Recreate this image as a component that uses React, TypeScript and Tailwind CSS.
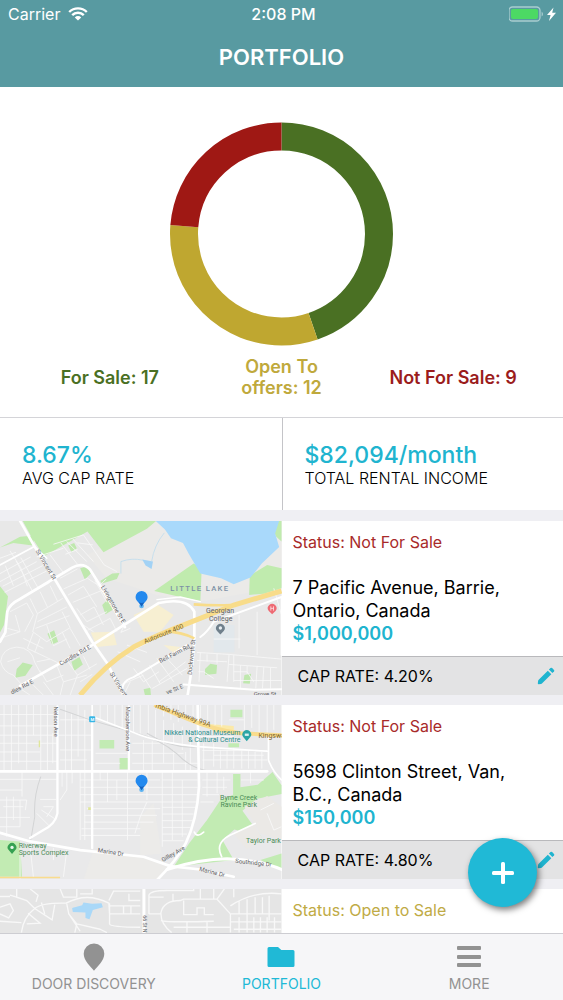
import React from 'react';

type StatusKind = 'notForSale' | 'openToSale';

interface Property {
  id: number;
  status: StatusKind;
  address: string;
  price: string;
  capRate: string;
  map: React.ReactNode;
}

interface Slice {
  label: string;
  value: number;
  color: string;
  textClass: string;
}

const SLICES: Slice[] = [
  { label: 'For Sale: 17', value: 17, color: '#4a7023', textClass: 'text-[#4a7023]' },
  { label: 'Open To\noffers: 12', value: 12, color: '#bfa730', textClass: 'text-[#bfa93c]' },
  { label: 'Not For Sale: 9', value: 9, color: '#9f1814', textClass: 'text-[#9b1c1c]' },
];

const STATUS: Record<StatusKind, { label: string; className: string }> = {
  notForSale: { label: 'Status: Not For Sale', className: 'text-[#a82a2a]' },
  openToSale: { label: 'Status: Open to Sale', className: 'text-[#bfab45]' },
};

const MAP_FONT = 'Roboto, sans-serif';

/** Donut with one arc per slice, clockwise from 12 o'clock. */
const DonutChart: React.FC<{ slices: Slice[] }> = ({ slices }) => {
  const total = slices.reduce((sum, s) => sum + s.value, 0);
  let start = 0;
  return (
    <svg viewBox="0 0 224 224" className="h-56 w-56" role="img" aria-label="Portfolio by status">
      <g transform="rotate(-90 112 112)" fill="none" strokeWidth="28">
        {slices.map((s) => {
          const length = (s.value / total) * 100;
          const offset = -start;
          start += length;
          return (
            <circle
              key={s.label}
              cx="112"
              cy="111.5"
              r="97.5"
              stroke={s.color}
              pathLength={100}
              strokeDasharray={`${length} ${100 - length}`}
              strokeDashoffset={offset}
            />
          );
        })}
      </g>
    </svg>
  );
};

const Marker = ({ x, y }: { x: number; y: number }) => (
  <g transform={`translate(${x} ${y})`}>
    <circle cx="0" cy="44" r="7" fill="#5fb4f2" />
    <path d="M0 46 C-3 36 -18 30 -18 17 A18 18 0 0 1 18 17 C18 30 3 36 0 46Z" fill="#2389ee" />
    <path d="M-8 33 Q0 37 8 33 L0 46Z" fill="#1561bd" />
  </g>
);

const BarrieMap = () => (
  <svg viewBox="0 18 843 522" preserveAspectRatio="xMidYMid slice" className="h-full w-full" aria-hidden>
    <rect width="843" height="560" fill="#e8e8e8" />
    <path d="M465 18 L260 120 L320 190 L470 240 L600 260 L843 215 V18Z" fill="#ebeae8" />
    <path d="M68 18 H468 L440 42 L310 112 L262 50 L132 124 L92 62Z" fill="#c0ebae" />
    <path d="M0 98 L60 66 L104 62 L98 92 L40 84Z M0 214 L24 244 L12 330 L0 352Z" fill="#c0ebae" />
    <path d="M462 228 L580 146 L604 160 L600 258 L540 246Z" fill="#c0ebae" />
    <path d="M748 182 L800 150 L843 160 V220 L790 236 L746 240Z M808 18 H843 V80 L826 64Z" fill="#c0ebae" />
    <path
      d="M204 92 L222 84 L230 100 L214 112Z M240 160 L262 154 L272 176 L254 194Z M300 198 L336 176 L358 174 L350 192 L306 206Z M306 270 L324 252 L338 284 L316 298Z M142 356 L162 346 L174 380 L156 388Z M50 462 L68 442 L98 450 L76 482 L46 488Z M214 440 L238 426 L248 448 L222 468Z M614 462 L630 446 L650 450 L648 476 L614 480Z M732 480 L752 476 L748 506 L728 504Z M430 522 L450 518 L452 540 H434Z"
      fill="#bfe8ae"
    />
    <path
      d="M466 18 H836 L824 56 L836 96 L784 146 L750 188 L700 208 L662 190 L600 176 L566 118 L548 84 L512 70 L494 44Z"
      fill="#a9d9fb"
    />
    <path d="M426 134 L458 140 L454 162 L436 152Z" fill="#a2d2f5" />
    <path d="M362 176 V140 Q396 128 428 136 M454 140 Q462 90 492 54" fill="none" stroke="#b5d9ee" strokeWidth="2" />
    <path d="M400 300 L470 268 L520 300 L480 350 L430 350Z M272 352 L340 350 L350 390 L290 396Z M490 390 L540 396 L520 414Z" fill="#f7efd2" />
    <path d="M640 330 H702 V412 H640Z" fill="#e2e8ec" />
    <path
      d="M110 126 L190 100 M150 120 L192 176 M160 88 L250 60 L312 150 L350 170 M182 84 L232 148 M200 80 L260 140 M218 72 L280 140 M196 118 L232 104 M232 84 L278 90 M0 176 L92 126 M0 200 L110 140 M8 214 L128 152 M14 232 L140 168 M30 108 L62 158 L82 214 M0 130 L48 112 M48 138 L98 230 M62 128 L116 222 M16 152 L40 212"
      fill="none"
      stroke="#f8f8f8"
      strokeWidth="2.5"
    />
    <path
      d="M180 190 L232 162 M190 222 L262 190 L302 216 M204 240 L250 214 L290 276 M218 262 L306 226 M230 280 L260 320 L320 290 M240 300 L282 276 L310 330 M250 330 L280 350 M262 346 L330 310 L350 350 M284 196 L320 262 M318 192 L300 210 M40 262 L148 204 M30 290 L80 264 L100 300 L74 350 M90 250 L112 296 L188 250 M120 230 L142 276 M150 212 L172 258 M46 300 L60 350 L22 340 M112 296 L98 350 L140 380 M112 320 L200 276 M106 340 L208 302 M140 380 L210 338 L186 290 M140 330 L160 392 M100 352 L82 400 L180 446 M70 370 L130 400 M120 370 L104 412 M210 340 L240 392 M186 350 L210 400 M160 392 L200 372 M0 370 L60 350"
      fill="none"
      stroke="#f7f7f7"
      strokeWidth="2.5"
    />
    <path
      d="M2 440 Q6 400 50 396 Q96 398 104 442 L126 482 M2 440 Q10 472 40 480 L66 510 M22 440 L60 428 M110 440 L150 432 M120 466 L140 500 L190 480 M170 450 L190 500 L180 540 M130 500 L160 540 M204 440 L232 480 L210 540 M232 480 L290 446 M240 500 L276 478 M250 424 L270 464 M190 500 L260 480 M100 510 L130 540 M60 520 L90 540"
      fill="none"
      stroke="#f7f7f7"
      strokeWidth="2.5"
    />
    <path
      d="M372 332 L362 352 L390 340 M352 410 L420 440 M380 390 L440 412 M346 430 L470 370 M400 460 L430 500 L476 470 M420 470 L452 520 M448 450 L480 506 M470 430 L520 500 M500 430 L546 480 M476 500 L556 440 M456 520 L560 460 M360 510 L430 480 M370 540 L390 500 M590 412 L686 418 L680 500 M590 436 L680 440 M594 470 H610 L640 490 M600 412 L596 500 M620 418 V440 M650 416 V446 M686 448 L830 458 M700 420 L700 500 M720 450 V520 M740 452 V476 M770 452 L766 520 M790 456 L786 520 M810 458 V520 M700 470 H740 L760 500 M700 496 H843 M686 418 L843 432 M716 300 V400 M770 290 V420 M640 372 H720 M820 220 L843 300"
      fill="none"
      stroke="#f8f8f8"
      strokeWidth="2.5"
    />
    <g fill="none" stroke="#fff" strokeLinecap="round" strokeLinejoin="round">
      <path d="M60 18 L104 96 L166 196 L276 380 L322 446 L370 540" strokeWidth="8" />
      <path d="M0 150 L100 96 M100 92 L140 130" strokeWidth="5" />
      <path d="M0 380 L16 352 L22 290 Q28 268 60 252 L216 158 Q248 140 270 164 L306 222 L374 336" strokeWidth="8" />
      <path d="M60 512 L276 390 L476 264 Q560 246 582 290 V372 Q580 430 562 540" strokeWidth="8" />
      <path d="M370 540 Q356 500 400 486 L560 390 M600 366 Q622 350 640 320 L843 246 M550 508 L760 524 L843 522" strokeWidth="6" />
      <path d="M470 254 L540 246 L600 260" strokeWidth="4" />
      <path d="M843 246 V420" strokeWidth="5" />
    </g>
    <g fill="none" stroke="#f8dc8a">
      <path d="M500 350 Q540 350 582 370 M580 268 Q640 272 690 270" strokeWidth="8" />
      <path d="M240 540 Q312 450 400 396 Q470 360 560 326 L700 270 L843 228" strokeWidth="15" />
    </g>
    <g fill="#5d6063" fontFamily={MAP_FONT} fontSize="18">
      <text transform="translate(106 108) rotate(59)">St Vincent St</text>
      <text transform="translate(302 216) rotate(60)">Livingstone St E</text>
      <text transform="translate(182 452) rotate(-30)">Cundles Rd E</text>
      <text transform="translate(36 538) rotate(-28)">dles Rd E</text>
      <text transform="translate(328 476) rotate(58)">St Vincent</text>
      <text transform="translate(480 444) rotate(-27)">Bell Farm Rd</text>
      <text transform="translate(574 480) rotate(-84)">Duckworth St</text>
      <text transform="translate(500 538) rotate(-22)">ve St E</text>
      <text x="760" y="542">Grove St</text>
      <text transform="translate(434 386) rotate(-22)" fill="#7b6328" fontSize="20">Autoroute 400</text>
      <text x="617" y="294" fontSize="21">Georgian</text>
      <text x="626" y="317" fontSize="21">College</text>
      <text x="510" y="227" fill="#7d92a6" fontSize="23" className="font-medium tracking-[4px]">LITTLE LAKE</text>
    </g>
    <path d="M660 358 L650 348 A13 13 0 1 1 670 348Z" fill="#70808c" />
    <circle cx="660" cy="339" r="5" fill="#e8eef2" />
    <path d="M815 298 L805 288 A13 13 0 1 1 825 288Z" fill="#ee6a73" />
    <path d="M811 274 V287 M819 274 V287 M811 280 H819" stroke="#fff" strokeWidth="2" />
    <Marker x={424} y={229} />
  </svg>
);

const BurnabyMap = () => (
  <svg viewBox="0 15 843 522" preserveAspectRatio="xMidYMid slice" className="h-full w-full" aria-hidden>
    <rect width="843" height="560" fill="#e9e9ea" />
    <path d="M250 540 L280 450 L420 468 L500 500 L470 540Z M420 350 L460 310 L484 460 L420 466Z" fill="#ecebe9" />
    <path
      d="M0 420 L60 424 L66 530 H0Z M698 222 H720 V262 L772 254 L816 216 L843 256 V282 L770 296 L726 332 L784 412 L702 388 L666 420 L700 480 L520 500 L566 430 L620 360 L660 300 L698 284Z"
      fill="#c2ebb3"
    />
    <path d="M732 320 L800 288 L843 320 V420 L780 400Z M700 400 L760 372 L784 412 L740 448Z" fill="#ebe9e6" />
    <path d="M298 120 H342 V146 H298Z M358 174 H384 V208 H358Z M690 30 H726 V52 H690Z M684 130 H716 V142 H684Z M780 480 L843 460 V510Z" fill="#c2ebb3" />
    <path d="M624 72 L700 78 L700 100 L640 96Z" fill="#fbe9a8" />
    <g fill="none" stroke="#f9f9f9" strokeWidth="2.5">
      <path d="M0 44 H170 M0 78 H168 M0 106 H276 M0 130 H170 M0 156 H120 M0 184 H170 M12 15 V210 M34 15 V210 M56 15 V190 M80 15 V210 M100 15 V106 M122 15 V210 M142 15 V210 M158 100 V190 M196 15 V210 M214 40 V210 M234 15 V170 M254 30 V212 M180 60 H276 M180 150 H276 M180 180 H260" />
      <path d="M300 15 V60 M322 15 V70 M344 15 V80 M366 15 V86 M400 15 V96 M420 15 V100 M444 15 V110 M466 30 V120 M490 60 V190 M520 70 V130 M546 80 V150 M570 90 V212 M286 160 H380 M286 190 H360 M396 130 H480 M396 160 H550 M396 190 H592 M430 120 V210 M456 124 V210 M520 150 V212 M556 156 V212" />
      <path d="M490 15 V50 M512 15 V60 M534 15 V66 M556 15 V60 M578 15 V70 M600 15 V80 M622 15 V60 M644 15 V76 M664 15 V80 M686 60 H730 M732 15 V90 M754 15 V84 M776 15 V100 M800 15 V110 M820 15 V90 M600 110 H700 M610 130 V210 M640 130 V200 M660 150 V206 M680 150 V206 M700 144 V206 M724 150 V206 M744 150 V206 M764 156 V206 M784 156 V206 M606 180 H800 M640 166 H790 M606 152 H800" />
      <path d="M0 238 H170 M0 270 H66 M0 300 H80 L76 330 M0 352 H90 M20 290 V410 M40 290 V360 M66 215 V290 M60 300 V380 M10 320 H70 M0 380 H60 M200 215 V270 L180 300 M186 215 V260 M216 215 V250 M120 298 H168 M130 320 H160 L140 350 M110 340 L150 380 M124 330 L164 356" />
      <path d="M240 215 V420 M254 215 V420 M240 240 H480 M240 262 H592 M240 284 H592 M240 306 H590 M260 326 H480 M252 346 H470 M252 366 H460 M244 386 H420 M244 406 H420 M300 215 V240 M322 215 V306 M350 240 V300 M382 215 V420 M440 215 V300 M486 215 V440 M516 215 V420 M546 240 V410 M486 240 H592 M486 322 H586 M486 342 H580 M486 362 H576 M486 382 H570 M486 402 H560 M486 422 H550 M440 306 L420 350 L404 400" />
      <path d="M606 240 H690 M606 262 H680 M620 215 V290 M650 215 V280 M670 230 V270 M606 284 H656 M600 306 H640 M722 240 H790 M750 215 V250 M90 440 L100 530 M60 430 V540 M160 444 V480 M200 450 L190 530 M800 340 L820 390 L843 380 M780 330 L820 310" />
    </g>
    <g fill="none" stroke="#d3d4d5" strokeWidth="3">
      <path d="M180 28 L270 60 L400 98 Q480 118 530 162 Q570 204 620 212 L790 212 M440 100 Q520 150 600 140 M122 230 Q100 290 104 350 L92 420" />
    </g>
    <g fill="none" stroke="#fff" strokeLinecap="round" strokeLinejoin="round">
      <path d="M0 214 H800" strokeWidth="8" />
      <path d="M172 20 V340 Q166 372 130 390 L90 414 M276 60 V444 M386 20 V210" strokeWidth="7" />
      <path d="M592 15 L596 260 Q590 360 556 430 Q530 480 470 540" strokeWidth="8" />
      <path d="M0 398 L90 424 L240 450 L430 470 L510 498 L600 508 L700 530" strokeWidth="8" />
      <path d="M500 508 Q600 476 680 476 Q780 480 843 508" strokeWidth="9" />
      <path d="M804 110 V180 Q816 214 843 240 M610 396 Q590 414 582 396 M664 470 Q640 424 700 400 L764 370 M276 15 V50 L400 98 Q470 128 592 140 L800 154" strokeWidth="5" />
    </g>
    <path d="M462 15 L560 56 Q640 90 720 100 L843 106" fill="none" stroke="#f9dc8d" strokeWidth="12" />
    <path d="M0 532 H180" stroke="#f9dc8d" strokeWidth="5" />
    <path d="M264 322 h8 v8 h-8Z M116 122 h4 v20 h-4Z" fill="#dfe69a" />
    <rect x="267" y="49" width="18" height="18" rx="3" fill="#35b5e5" />
    <text x="271" y="63" fill="#fff" fontFamily={MAP_FONT} fontSize="13" className="font-bold">M</text>
    <g fill="#5d6063" fontFamily={MAP_FONT} fontSize="18">
      <text transform="translate(162 20) rotate(90)">Nelson Ave</text>
      <text transform="translate(376 20) rotate(90)">Macpherson Ave</text>
      <text transform="translate(292 456) rotate(9)">Marine Dr</text>
      <text transform="translate(488 486) rotate(-30)">Gilley Ave</text>
      <text transform="translate(596 512) rotate(14)">Marine Dr</text>
      <text transform="translate(704 488) rotate(6)">Southridge Dr</text>
      <text transform="translate(464 22) rotate(20)" fill="#7b6328" fontSize="21">mbia Highway 99A</text>
      <text x="774" y="114" fill="#7b6328" fontSize="21">Kingsway</text>
    </g>
    <g fill="#2c8e8e" fontFamily={MAP_FONT} fontSize="21" textAnchor="end">
      <text x="720" y="106">Nikkei National Museum</text>
      <text x="720" y="127">&amp; Cultural Centre</text>
    </g>
    <g fill="#4a8b57" fontFamily={MAP_FONT} fontSize="21">
      <text x="659" y="300">Byrne Creek</text>
      <text x="660" y="321">Ravine Park</text>
      <text x="56" y="444">Riverway</text>
      <text x="56" y="465">Sports Complex</text>
      <text x="737" y="429">Taylor Park</text>
    </g>
    <path d="M739 124 L729 112 A13 13 0 1 1 749 112Z" fill="#2aa5a5" />
    <path d="M733 108 V101 H745 V108Z" fill="#d9f1f1" />
    <path d="M36 462 L26 450 A13 13 0 1 1 46 450Z" fill="#36a052" />
    <circle cx="36" cy="442" r="5" fill="#e9f6ec" />
    <Marker x={424} y={225} />
  </svg>
);

const EdmontonMap = () => (
  <svg viewBox="0 25 843 522" preserveAspectRatio="xMidYMid slice" className="h-full w-full" aria-hidden>
    <rect width="843" height="560" fill="#e5e5e5" />
    <path d="M216 82 L246 74 L250 66 L276 70 L304 68 L308 80 L278 88 L268 116 L256 112 L256 96 L218 94Z" fill="#a9d8f8" />
    <g fill="none" stroke="#f8f8f8" strokeWidth="4">
      <path d="M0 80 L30 70 L40 90 L26 112 L0 100 M50 25 V50 L80 60 L104 84 M50 50 L30 44 M64 156 Q70 110 104 84 Q124 66 200 68 M90 25 L114 44 L108 64 M104 84 L156 118 L164 72 M84 98 L120 128 L80 130 M124 66 L134 100 M0 122 L64 126 M180 25 L190 50 H230 V25 M0 48 H30" />
      <path d="M198 68 Q260 34 326 68 L328 100 H420 M200 70 L206 100 L230 130 L224 156 M230 130 L300 146 M206 100 L240 152 M328 68 V130 Q330 140 420 140 M328 76 H420 M326 60 L340 32 H420 M370 76 V100 M386 40 V60 H420 M392 76 V100 M240 40 H276 V25 M300 146 L320 156" />
      <path d="M446 100 V44 Q450 30 500 30 H580 V25 M446 50 H490 M446 100 H480 M514 156 Q480 130 482 96 Q490 60 540 60 L550 56 H650 L690 100 V156 M550 60 V102 H590 V82 H612 V102 H640 M482 120 Q500 126 640 122 M640 25 V56 M600 25 V56 M650 56 L672 25 M518 40 V60 M520 140 H690 M560 122 V156 M620 122 V156 M690 76 Q760 30 843 40 M692 100 H843 M692 124 H843 M716 60 V100 M740 56 V156 M764 50 V100 M786 50 V100 M806 46 V120 M716 110 V156 M760 110 V156 M780 110 V156 M800 110 V156 M822 110 V156 M700 146 H843 M700 25 V50" />
    </g>
    <path d="M431 25 V540" stroke="#fff" strokeWidth="9" />
    <text transform="translate(427 104) rotate(90)" fill="#5d6063" fontFamily={MAP_FONT} fontSize="16">66 St NW</text>
  </svg>
);

const PROPERTIES: Property[] = [
  {
    id: 1,
    status: 'notForSale',
    address: '7 Pacific Avenue, Barrie, Ontario, Canada',
    price: '$1,000,000',
    capRate: '4.20%',
    map: <BarrieMap />,
  },
  {
    id: 2,
    status: 'notForSale',
    address: '5698 Clinton Street, Van, B.C., Canada',
    price: '$150,000',
    capRate: '4.80%',
    map: <BurnabyMap />,
  },
  {
    id: 3,
    status: 'openToSale',
    address: '66 Street NW, Edmonton, Alberta, Canada',
    price: '$320,000',
    capRate: '5.10%',
    map: <EdmontonMap />,
  },
];

const WifiIcon = () => (
  <svg viewBox="0 0 20 14" className="h-3.5 w-5" aria-hidden>
    <g fill="none" stroke="#fff" strokeWidth="2.4">
      <path d="M1.2 5 A12.6 12.6 0 0 1 18.8 5" />
      <path d="M4.2 8.2 A8.2 8.2 0 0 1 15.8 8.2" />
    </g>
    <path d="M6.8 10.4 A4.6 4.6 0 0 1 13.2 10.4 L10 13.6Z" fill="#fff" />
  </svg>
);

const BatteryIcon = () => (
  <svg viewBox="0 0 50 18" className="h-[18px] w-[50px]" aria-hidden>
    <rect x="0" y="2" width="31" height="14" rx="3.5" fill="none" stroke="#a9cdd0" strokeWidth="1.3" />
    <rect x="2" y="4" width="27" height="10" rx="2" fill="#4cd964" />
    <path d="M32.6 6.5 Q34 7.5 34 9 Q34 10.5 32.6 11.5Z" fill="#a9cdd0" />
    <path d="M44.5 2.5 L38 10 H41.6 L40 16 L47 7.8 H43.2Z" fill="#fff" />
  </svg>
);

const PencilIcon = () => (
  <svg viewBox="0 0 18 18" className="h-[18px] w-[18px]" fill="currentColor" aria-hidden>
    <path d="M10.8 3.7 L14.3 7.2 L5.2 16.3 Q4.7 16.8 4 16.9 L1.6 17.2 Q.8 17.2 .8 16.4 L1.1 14 Q1.2 13.3 1.7 12.8Z" />
    <path d="M11.9 2.6 L13.5 1 Q14.3 .3 15.1 1 L17 2.9 Q17.7 3.7 17 4.5 L15.4 6.1Z" />
  </svg>
);

const PinIcon = () => (
  <svg viewBox="0 0 22 28" className="h-7 w-[22px]" fill="currentColor" aria-hidden>
    <path d="M11 .5 A10.3 10.3 0 0 1 21.3 10.8 C21.3 17.5 14.5 23.5 11 27.8 C7.5 23.5 .7 17.5 .7 10.8 A10.3 10.3 0 0 1 11 .5Z" />
  </svg>
);

const FolderIcon = () => (
  <svg viewBox="0 0 28 28" className="h-7 w-7" fill="currentColor" aria-hidden>
    <path d="M2 4 H11 L14.3 7 H26 Q27.5 7 27.5 8.5 V22.5 Q27.5 24 26 24 H2 Q.5 24 .5 22.5 V5.5 Q.5 4 2 4Z" />
  </svg>
);

const MenuIcon = () => (
  <svg viewBox="0 0 24 28" className="h-7 w-6" fill="currentColor" aria-hidden>
    <rect y="3" width="24" height="4" rx="1" />
    <rect y="12" width="24" height="4" rx="1" />
    <rect y="20" width="24" height="4" rx="1" />
  </svg>
);

const StatCell: React.FC<{ value: string; label: string; className?: string }> = ({
  value,
  label,
  className = '',
}) => (
  <div className={`px-[22px] pt-6 pb-[22px] ${className}`}>
    <p className="text-[23px] leading-[26px] font-medium text-[#20b4cf]">{value}</p>
    <p className="text-base leading-5 font-light text-black">{label}</p>
  </div>
);

const PropertyCard: React.FC<{ property: Property }> = ({ property }) => {
  const status = STATUS[property.status];
  return (
    <article className="grid h-[174px] grid-cols-2 bg-white">
      <div className="min-h-0 overflow-hidden">{property.map}</div>
      <div className="flex min-w-0 flex-col">
        <div className="flex-1 pt-[11px] pr-10 pl-[11px]">
          <p className={`text-base leading-5 ${status.className}`}>{status.label}</p>
          <h2 className="mt-6 text-lg leading-[23px] font-normal text-black">{property.address}</h2>
          <p className="text-lg leading-[23px] font-semibold text-[#20b4cf]">{property.price}</p>
        </div>
        <div className="flex h-[39px] items-center justify-between border-t border-[#b9b9bc] bg-[#e3e3e4] pr-2 pl-4">
          <span className="text-base text-black">CAP RATE: {property.capRate}</span>
          <button type="button" aria-label={`Edit ${property.address}`} className="text-[#20b4cf]">
            <PencilIcon />
          </button>
        </div>
      </div>
    </article>
  );
};

const TABS = [
  { label: 'DOOR DISCOVERY', icon: <PinIcon />, active: false },
  { label: 'PORTFOLIO', icon: <FolderIcon />, active: true },
  { label: 'MORE', icon: <MenuIcon />, active: false },
];

export default function App() {
  return (
    <div className="relative flex h-screen flex-col overflow-hidden bg-[#efeff3] font-['Inter',sans-serif]">
      <header className="h-[87px] shrink-0 bg-[#589aa1] text-white">
        <div className="grid h-7 grid-cols-3 items-center pr-1 pl-2 text-base">
          <div className="flex items-center gap-2">
            <span>Carrier</span>
            <WifiIcon />
          </div>
          <span className="text-center font-medium">2:08 PM</span>
          <div className="flex justify-end">
            <BatteryIcon />
          </div>
        </div>
        <h1 className="text-center text-[22px] leading-[59px] font-semibold">PORTFOLIO</h1>
      </header>

      <main className="min-h-0 flex-1 overflow-y-auto [scrollbar-width:none]">
        <section className="bg-white pt-[35px]">
          <div className="flex justify-center">
            <DonutChart slices={SLICES} />
          </div>
          <ul className="grid grid-cols-3 items-center px-6 pt-2.5 pb-[19px] text-center text-lg leading-[21px] font-semibold">
            {SLICES.map((s) => (
              <li key={s.label} className={`whitespace-pre-line ${s.textClass}`}>
                {s.label}
              </li>
            ))}
          </ul>
        </section>

        <section className="mb-[11px] grid grid-cols-2 border-t border-[#d4d4d8] bg-white">
          <StatCell value="8.67%" label="AVG CAP RATE" />
          <StatCell value="$82,094/month" label="TOTAL RENTAL INCOME" className="border-l border-[#c4c4c8]" />
        </section>

        <section className="space-y-2.5">
          {PROPERTIES.map((p) => (
            <PropertyCard key={p.id} property={p} />
          ))}
        </section>
      </main>

      <button
        type="button"
        aria-label="Add property"
        className="absolute right-[26px] bottom-[93px] flex h-[69px] w-[69px] items-center justify-center rounded-full bg-[#20b9d6] text-white shadow-[2px_3px_6px_rgba(0,0,0,0.5)]"
      >
        <svg viewBox="0 0 22 22" className="h-[22px] w-[22px]" fill="currentColor" aria-hidden>
          <rect x="9" y="0" width="4" height="22" rx="1.5" />
          <rect x="0" y="9" width="22" height="4" rx="1.5" />
        </svg>
      </button>

      <nav className="grid h-[67px] shrink-0 grid-cols-3 border-t border-[#cdcdd2] bg-[#f6f6f8]">
        {TABS.map((tab) => (
          <a
            key={tab.label}
            href="#"
            aria-current={tab.active ? 'page' : undefined}
            className={`flex flex-col items-center gap-1 pt-[9px] text-sm leading-[18px] ${
              tab.active ? 'text-[#20b9d6]' : 'text-[#929292]'
            }`}
          >
            {tab.icon}
            {tab.label}
          </a>
        ))}
      </nav>
    </div>
  );
}
